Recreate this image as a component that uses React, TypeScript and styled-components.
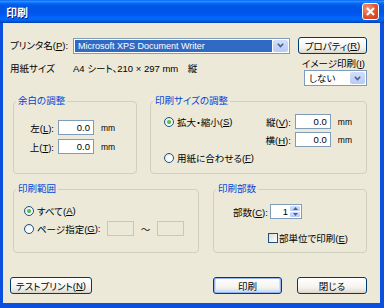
import styled, { createGlobalStyle } from 'styled-components';

const GlobalStyle = createGlobalStyle`
  html, body {
    margin: 0;
    padding: 0;
    background: #ffffff;
  }
  body {
    font-family: "Liberation Sans", "Noto Sans CJK JP", sans-serif;
    font-size: 9.5px;
    font-feature-settings: "palt" 1;
    color: #000;
  }
`;

const Window = styled.div`
  width: 384px;
  height: 308px;
  display: flex;
  flex-direction: column;
  background: #0a4fdd;
  box-sizing: border-box;
`;

const TitleBar = styled.div`
  height: 23px;
  flex: none;
  display: flex;
  align-items: center;
  padding-left: 6px;
  background: linear-gradient(
    to bottom,
    #0058ee 0%,
    #3593ff 5%,
    #1a84ff 9%,
    #036ffc 13%,
    #0262ee 18%,
    #0057e5 26%,
    #0055eb 56%,
    #005bf5 68%,
    #026afe 78%,
    #0062ef 88%,
    #0052d6 94%,
    #0040ab 100%
  );
`;

const Title = styled.span`
  flex: 1;
  color: #fff;
  font-family: "Noto Sans CJK JP", sans-serif;
  font-weight: 700;
  font-size: 11px;
  text-shadow: 1px 1px 0 #0a1e80;
`;

const CloseButton = styled.div`
  width: 17px;
  height: 17px;
  margin-right: 5px;
  box-sizing: border-box;
  border: 1px solid #fff;
  border-radius: 3px;
  background: radial-gradient(circle at 30% 30%, #f19a7b, #e0532f 55%, #c33b18);
  display: flex;
  align-items: center;
  justify-content: center;
`;

const Body = styled.div`
  flex: 1;
  margin: 0 4px 5px 3px;
  background: #ece9d8;
  display: flex;
  flex-direction: column;
  padding: 14px 13px 9px 7px;
  box-sizing: border-box;
`;

const Row = styled.div`
  display: flex;
  align-items: center;
`;

const PaperRow = styled.div`
  display: flex;
  align-items: flex-start;
  justify-content: space-between;
  margin-top: 4px;
  height: 28px;
`;

const FieldLabel = styled.span`
  width: 63px;
  flex: none;
  line-height: 12px;
  white-space: nowrap;
`;

const PaperInfo = styled.div`
  display: flex;
  margin-top: 5px;
`;

const PaperText = styled.span`
  line-height: 12px;
  white-space: nowrap;
`;

const ImageColumn = styled.div`
  display: flex;
  flex-direction: column;
  align-items: flex-end;
`;

const SmallLabel = styled.span`
  line-height: 12px;
  margin-right: 2px;
  white-space: nowrap;
`;

const Combo = styled.div<{ $width: number }>`
  width: ${(p) => p.$width}px;
  height: 16px;
  box-sizing: border-box;
  border: 1px solid #7f9db9;
  background: #fff;
  display: flex;
  padding: 1px;
`;

const ComboText = styled.span<{ $selected?: boolean }>`
  flex: 1;
  display: flex;
  align-items: center;
  padding-left: 3px;
  margin-right: 1px;
  background: ${(p) => (p.$selected ? '#316ac5' : 'transparent')};
  color: ${(p) => (p.$selected ? '#fff' : '#000')};
  font-size: ${(p) => (p.$selected ? '9px' : '9.5px')};
  white-space: nowrap;
`;

const ComboArrow = styled.span`
  width: 15px;
  flex: none;
  border-radius: 2px;
  background: linear-gradient(to bottom, #d2defb, #b7cbf6);
  display: flex;
  align-items: center;
  justify-content: center;
`;

const Button = styled.div<{ $width: number; $default?: boolean }>`
  width: ${(p) => p.$width}px;
  height: 17px;
  box-sizing: border-box;
  border: 1px solid #003c74;
  border-radius: 3px;
  background: linear-gradient(to bottom, #ffffff 0%, #f5f4ef 60%, #e3e1d6 90%, #d6d0c5 100%);
  box-shadow: ${(p) => (p.$default ? 'inset 0 0 0 1px #99b4ee, inset 0 -1px 0 2px #cde0fb' : 'none')};
  display: flex;
  align-items: center;
  justify-content: center;
  white-space: nowrap;
  flex: none;
`;

const PropsButton = styled(Button)`
  margin-left: auto;
`;

const GroupsRow = styled.div<{ $gap: number }>`
  display: flex;
  gap: ${(p) => p.$gap}px;
  margin-top: 9px;
  margin-left: 3px;
`;

const Group = styled.fieldset<{ $width?: number }>`
  margin: 0;
  padding: 0;
  border: 1px solid #d0d0bf;
  border-radius: 4px;
  box-sizing: border-box;
  min-width: 0;
  width: ${(p) => (p.$width ? `${p.$width}px` : 'auto')};
  flex: ${(p) => (p.$width ? 'none' : '1')};
`;

const Legend = styled.legend`
  color: #0046d5;
  padding: 0 2px;
  margin-left: 2px;
  line-height: 12px;
  white-space: nowrap;
`;

const MarginContent = styled.div`
  padding: 13px 0 18px 10px;
  display: flex;
  flex-direction: column;
  gap: 4px;
`;

const SizeContent = styled.div`
  padding: 7px 14px 8px 13px;
`;

const RangeContent = styled.div`
  padding: 8px 14px 16px 10px;
  display: flex;
  flex-direction: column;
  gap: 3px;
`;

const CopiesContent = styled.div`
  padding: 9px 8px 8px 19px;
`;

const InputRow = styled.div`
  display: flex;
  align-items: center;
  height: 15px;
`;

const InputLabel = styled.span<{ $width: number }>`
  width: ${(p) => p.$width}px;
  text-align: right;
  margin-right: 4px;
  white-space: nowrap;
  flex: none;
`;

const NumberBox = styled.div`
  width: 36px;
  height: 15px;
  box-sizing: border-box;
  border: 1px solid #7f9db9;
  background: #fff;
  display: flex;
  align-items: center;
  justify-content: flex-end;
  padding-right: 3px;
  flex: none;
`;

const Unit = styled.span`
  margin-left: 7px;
  font-size: 8.5px;
`;

const SizeTop = styled.div`
  display: flex;
  justify-content: space-between;
  align-items: flex-start;
`;

const SizeFields = styled.div`
  display: flex;
  flex-direction: column;
  gap: 3px;
`;

const Choice = styled.label`
  display: flex;
  align-items: center;
  height: 15px;
  white-space: nowrap;
`;

const FitChoice = styled(Choice)`
  margin-top: 3px;
`;

const RadioDot = styled.span<{ $checked?: boolean }>`
  width: 10px;
  height: 10px;
  box-sizing: border-box;
  border-radius: 50%;
  border: 1px solid #1c5180;
  background: radial-gradient(circle at 65% 65%, #ffffff 30%, #dcdcd4);
  display: inline-flex;
  align-items: center;
  justify-content: center;
  margin-right: 3px;
  flex: none;

  &::after {
    content: '';
    width: 4px;
    height: 4px;
    border-radius: 50%;
    background: ${(p) => (p.$checked ? 'radial-gradient(circle at 40% 40%, #5fd35f, #21a121)' : 'transparent')};
  }
`;

const RangeRow = styled.div`
  display: flex;
  align-items: center;
  justify-content: space-between;
  height: 15px;
`;

const PageFields = styled.div`
  display: flex;
  align-items: center;
`;

const PageBox = styled.div`
  width: 27px;
  height: 15px;
  box-sizing: border-box;
  border: 1px solid #c9c7ba;
  background: #ece9d8;
`;

const Tilde = styled.span`
  width: 23px;
  text-align: center;
`;

const Spin = styled.div`
  width: 32px;
  height: 15px;
  box-sizing: border-box;
  border: 1px solid #7f9db9;
  background: #fff;
  display: flex;
  align-items: center;
  padding: 1px;
  flex: none;
`;

const SpinValue = styled.span`
  flex: 1;
  text-align: right;
  padding-right: 2px;
`;

const SpinArrows = styled.span`
  width: 10px;
  height: 11px;
  display: flex;
  flex-direction: column;
  gap: 1px;
`;

const SpinArrow = styled.span`
  flex: 1;
  border-radius: 1px;
  background: linear-gradient(to bottom, #d2defb, #b7cbf6);
  display: flex;
  align-items: center;
  justify-content: center;
`;

const CheckRow = styled.label`
  display: flex;
  align-items: center;
  margin-top: 13px;
  margin-left: 35px;
  height: 12px;
  white-space: nowrap;
`;

const CheckBox = styled.span`
  width: 10px;
  height: 10px;
  box-sizing: border-box;
  border: 1px solid #1c5180;
  background: linear-gradient(135deg, #dcdcd4, #ffffff);
  margin-right: 1px;
  flex: none;
`;

const ButtonRow = styled.div`
  display: flex;
  align-items: center;
  margin-top: auto;
  gap: 15px;
`;

const Spacer = styled.div`
  flex: 1;
`;

const Chevron = () => (
  <svg width="7" height="5" viewBox="0 0 7 5">
    <path d="M0.8 0.8 L3.5 3.6 L6.2 0.8" fill="none" stroke="#4d6185" strokeWidth="1.6" />
  </svg>
);

const Tri = ({ up }: { up?: boolean }) => (
  <svg width="5" height="3" viewBox="0 0 5 3">
    <path d={up ? 'M0 3 L2.5 0 L5 3 Z' : 'M0 0 L2.5 3 L5 0 Z'} fill="#4d6185" />
  </svg>
);

const App = () => {
  return (
    <>
      <GlobalStyle />
      <Window>
        <TitleBar>
          <Title>印刷</Title>
          <CloseButton>
            <svg width="9" height="9" viewBox="0 0 9 9">
              <path d="M1 1 L8 8 M8 1 L1 8" stroke="#fff" strokeWidth="2" />
            </svg>
          </CloseButton>
        </TitleBar>
        <Body>
          <Row>
            <FieldLabel>
              プリンタ名(<u>P</u>):
            </FieldLabel>
            <Combo $width={217}>
              <ComboText $selected>Microsoft XPS Document Writer</ComboText>
              <ComboArrow>
                <Chevron />
              </ComboArrow>
            </Combo>
            <PropsButton $width={69}>
              プロパティ(<u>R</u>)
            </PropsButton>
          </Row>

          <PaperRow>
            <PaperInfo>
              <FieldLabel>用紙サイズ</FieldLabel>
              <PaperText>A4 シート、210 × 297 mm　縦</PaperText>
            </PaperInfo>
            <ImageColumn>
              <SmallLabel>
                イメージ印刷(<u>I</u>)
              </SmallLabel>
              <Combo $width={63}>
                <ComboText>しない</ComboText>
                <ComboArrow>
                  <Chevron />
                </ComboArrow>
              </Combo>
            </ImageColumn>
          </PaperRow>

          <GroupsRow $gap={13}>
            <Group $width={124}>
              <Legend>余白の調整</Legend>
              <MarginContent>
                <InputRow>
                  <InputLabel $width={30}>
                    左(<u>L</u>):
                  </InputLabel>
                  <NumberBox>0.0</NumberBox>
                  <Unit>mm</Unit>
                </InputRow>
                <InputRow>
                  <InputLabel $width={30}>
                    上(<u>T</u>):
                  </InputLabel>
                  <NumberBox>0.0</NumberBox>
                  <Unit>mm</Unit>
                </InputRow>
              </MarginContent>
            </Group>

            <Group>
              <Legend>印刷サイズの調整</Legend>
              <SizeContent>
                <SizeTop>
                  <Choice>
                    <RadioDot $checked />
                    拡大・縮小(<u>S</u>)
                  </Choice>
                  <SizeFields>
                    <InputRow>
                      <InputLabel $width={30}>
                        縦(<u>V</u>):
                      </InputLabel>
                      <NumberBox>0.0</NumberBox>
                      <Unit>mm</Unit>
                    </InputRow>
                    <InputRow>
                      <InputLabel $width={30}>
                        横(<u>H</u>):
                      </InputLabel>
                      <NumberBox>0.0</NumberBox>
                      <Unit>mm</Unit>
                    </InputRow>
                  </SizeFields>
                </SizeTop>
                <FitChoice>
                  <RadioDot />
                  用紙に合わせる(<u>F</u>)
                </FitChoice>
              </SizeContent>
            </Group>
          </GroupsRow>

          <GroupsRow $gap={14}>
            <Group $width={186}>
              <Legend>印刷範囲</Legend>
              <RangeContent>
                <Choice>
                  <RadioDot $checked />
                  すべて(<u>A</u>)
                </Choice>
                <RangeRow>
                  <Choice>
                    <RadioDot />
                    ページ指定(<u>G</u>):
                  </Choice>
                  <PageFields>
                    <PageBox />
                    <Tilde>～</Tilde>
                    <PageBox />
                  </PageFields>
                </RangeRow>
              </RangeContent>
            </Group>

            <Group>
              <Legend>印刷部数</Legend>
              <CopiesContent>
                <InputRow>
                  <InputLabel $width={33}>
                    部数(<u>C</u>):
                  </InputLabel>
                  <Spin>
                    <SpinValue>1</SpinValue>
                    <SpinArrows>
                      <SpinArrow>
                        <Tri up />
                      </SpinArrow>
                      <SpinArrow>
                        <Tri />
                      </SpinArrow>
                    </SpinArrows>
                  </Spin>
                </InputRow>
                <CheckRow>
                  <CheckBox />
                  部単位で印刷(<u>E</u>)
                </CheckRow>
              </CopiesContent>
            </Group>
          </GroupsRow>

          <ButtonRow>
            <Button $width={82}>
              テストプリント(<u>N</u>)
            </Button>
            <Spacer />
            <Button $width={69} $default>
              印刷
            </Button>
            <Button $width={70}>閉じる</Button>
          </ButtonRow>
        </Body>
      </Window>
    </>
  );
};

export default App;
